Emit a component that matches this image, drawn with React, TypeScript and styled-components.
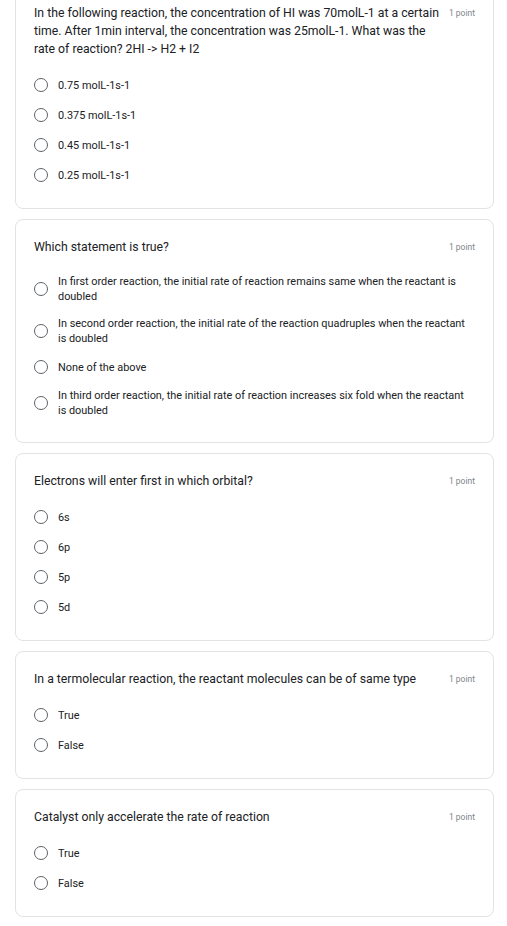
import React from "react";
import styled, { createGlobalStyle } from "styled-components";

const Global = createGlobalStyle`
  html, body { margin: 0; padding: 0; background: #ffffff; }
  body { font-family: Roboto, "Noto Sans", Arial, sans-serif; color: #202124; }
`;

const Page = styled.div`
  display: flex;
  flex-direction: column;
  gap: 10px;
  padding: 0 13px 0 15px;
  margin-top: -15px;
`;

const Card = styled.section`
  border: 1px solid #e3e3e3;
  border-radius: 8px;
  background: #fff;
  padding: 18px 17px 24px 18px;
  display: flex;
  flex-direction: column;
  gap: 18px;
`;

const Header = styled.div`
  display: flex;
  align-items: flex-start;
  gap: 10px;
`;

const Title = styled.div`
  flex: 1;
  font-size: 12.25px;
  line-height: 18px;
  color: #202124;
`;

const Points = styled.div`
  font-size: 8.5px;
  line-height: 18px;
  color: #80868b;
  white-space: nowrap;
  padding-right: 1px;
`;

const Options = styled.div`
  display: flex;
  flex-direction: column;
  gap: 12px;
`;

const Option = styled.label`
  display: flex;
  align-items: center;
  gap: 10px;
  min-height: 18px;
`;

const Radio = styled.span`
  flex: none;
  width: 12px;
  height: 12px;
  border: 1.6px solid #5f6368;
  border-radius: 50%;
`;

const OptionText = styled.span`
  font-size: 10.9px;
  line-height: 15px;
  color: #202124;
  padding-right: 7px;
`;

type Q = { title: string; options: string[] };

const questions: Q[] = [
  {
    title:
      "In the following reaction, the concentration of HI was 70molL-1 at a certain time. After 1min interval, the concentration was 25molL-1. What was the rate of reaction? 2HI -> H2 + I2",
    options: ["0.75 molL-1s-1", "0.375 molL-1s-1", "0.45 molL-1s-1", "0.25 molL-1s-1"],
  },
  {
    title: "Which statement is true?",
    options: [
      "In first order reaction, the initial rate of reaction remains same when the reactant is doubled",
      "In second order reaction, the initial rate of the reaction quadruples when the reactant is doubled",
      "None of the above",
      "In third order reaction, the initial rate of reaction increases six fold when the reactant is doubled",
    ],
  },
  {
    title: "Electrons will enter first in which orbital?",
    options: ["6s", "6p", "5p", "5d"],
  },
  {
    title: "In a termolecular reaction, the reactant molecules can be of same type",
    options: ["True", "False"],
  },
  {
    title: "Catalyst only accelerate the rate of reaction",
    options: ["True", "False"],
  },
];

export default function App() {
  return (
    <>
      <Global />
      <Page>
        {questions.map((q, i) => (
          <Card key={i}>
            <Header>
              <Title>{q.title}</Title>
              <Points>1 point</Points>
            </Header>
            <Options>
              {q.options.map((o, j) => (
                <Option key={j}>
                  <Radio />
                  <OptionText>{o}</OptionText>
                </Option>
              ))}
            </Options>
          </Card>
        ))}
      </Page>
    </>
  );
}
